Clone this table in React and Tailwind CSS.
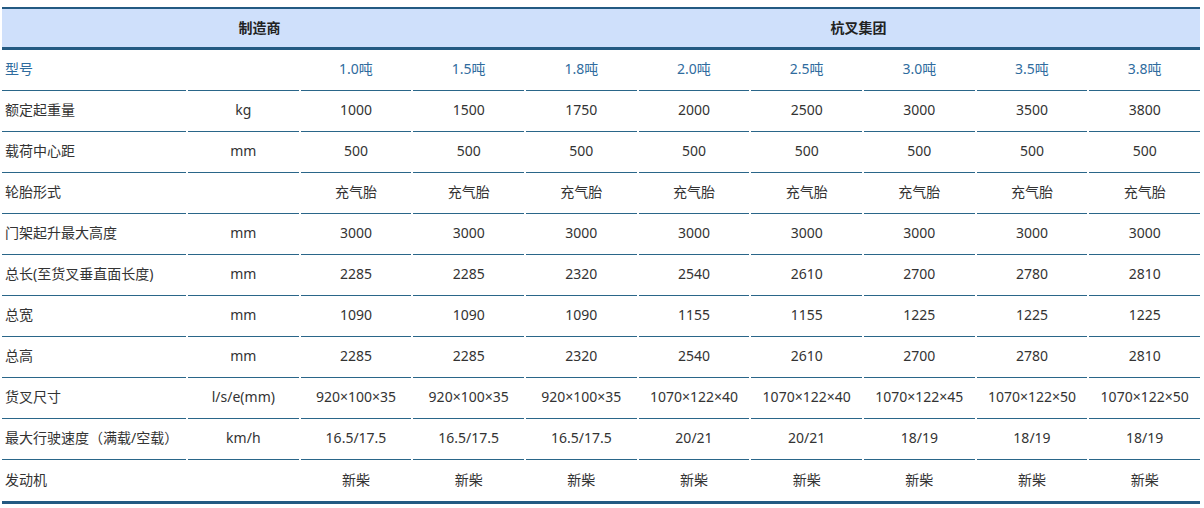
import React from "react";

const models = ["1.0吨", "1.5吨", "1.8吨", "2.0吨", "2.5吨", "3.0吨", "3.5吨", "3.8吨"];

const rows = [
  { label: "额定起重量", unit: "kg", values: ["1000", "1500", "1750", "2000", "2500", "3000", "3500", "3800"] },
  { label: "载荷中心距", unit: "mm", values: Array(8).fill("500") },
  { label: "轮胎形式", unit: "", values: Array(8).fill("充气胎") },
  { label: "门架起升最大高度", unit: "mm", values: Array(8).fill("3000") },
  { label: "总长(至货叉垂直面长度)", unit: "mm", values: ["2285", "2285", "2320", "2540", "2610", "2700", "2780", "2810"] },
  { label: "总宽", unit: "mm", values: ["1090", "1090", "1090", "1155", "1155", "1225", "1225", "1225"] },
  { label: "总高", unit: "mm", values: ["2285", "2285", "2320", "2540", "2610", "2700", "2780", "2810"] },
  { label: "货叉尺寸", unit: "l/s/e(mm)", values: ["920×100×35", "920×100×35", "920×100×35", "1070×122×40", "1070×122×40", "1070×122×45", "1070×122×50", "1070×122×50"] },
  { label: "最大行驶速度（满载/空载）", unit: "km/h", values: ["16.5/17.5", "16.5/17.5", "16.5/17.5", "20/21", "20/21", "18/19", "18/19", "18/19"] },
  { label: "发动机", unit: "", values: Array(8).fill("新柴") },
];

const Row = ({ label, unit, values, blue, last }) => {
  const cell = `h-[41px] pb-[3px] flex items-center ${last ? "" : "border-b border-[#2a6689]"}`;
  return (
    <div className="grid grid-cols-[184px_repeat(9,1fr)] gap-x-[2px]">
      <div className={`${cell} pl-[3px] ${blue ? "text-[#2f6c9e]" : ""}`}>{label}</div>
      <div className={`${cell} justify-center`}>{unit}</div>
      {values.map((v, i) => (
        <div key={i} className={`${cell} justify-center whitespace-nowrap ${blue ? "text-[#2f6c9e]" : ""}`}>
          {v}
        </div>
      ))}
    </div>
  );
};

const App = () => {
  return (
    <div
      className="w-[1204px] h-[508px] bg-white pt-[7px] pl-[2px] pr-[4px] text-[14px] text-[#333]"
      style={{ fontFamily: '"Noto Sans", "Noto Sans CJK SC", sans-serif' }}
    >
      <div className="border-t-2 border-b-[3px] border-[#235a82]">
        <div className="flex h-[41px] pb-[2px] bg-[#cfe0fb] border-b-[3px] border-[#235a82] font-bold text-[#222]">
          <div className="w-[515px] flex items-center justify-center">制造商</div>
          <div className="flex-1 flex items-center justify-center">杭叉集团</div>
        </div>
        <Row label="型号" unit="" values={models} blue />
        {rows.map((r, i) => (
          <Row key={r.label} {...r} last={i === rows.length - 1} />
        ))}
      </div>
    </div>
  );
};

export default App;
